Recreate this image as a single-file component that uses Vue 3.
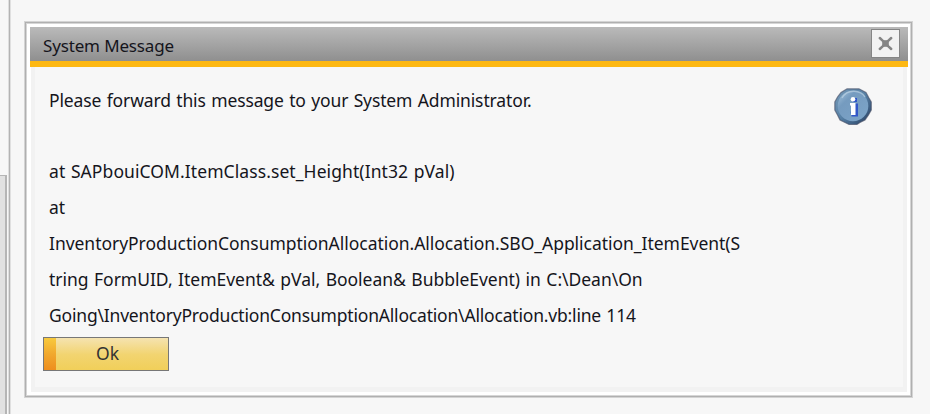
<script setup>
const lines = [
  { text: 'Please forward this message to your System Administrator.', cls: 'intro' },
  { text: '\u00a0', cls: 'blank' },
  { text: 'at SAPbouiCOM.ItemClass.set_Height(Int32 pVal)', cls: 'frame' },
  { text: 'at', cls: 'at' },
  { text: 'InventoryProductionConsumptionAllocation.Allocation.SBO_Application_ItemEvent(S', cls: 'method' },
  { text: 'tring FormUID, ItemEvent& pVal, Boolean& BubbleEvent) in C:\\Dean\\On', cls: 'args' },
  { text: 'Going\\InventoryProductionConsumptionAllocation\\Allocation.vb:line 114', cls: 'path' },
]
</script>

<template>
  <div class="screen">
    <aside class="rail"><div class="rail-panel"></div></aside>
    <main class="workspace">
      <section class="dialog" role="dialog">
        <header class="titlebar">
          <h1 class="title">System Message</h1>
          <button class="close" aria-label="Close">
            <svg width="15" height="15" viewBox="0 0 15 15">
              <path d="M1.8 2 4.6 4.6 10.4 10.4 13.2 13M13.2 2 10.4 4.6 4.6 10.4 1.8 13" fill="none" stroke="#858585" stroke-width="2.5" stroke-linecap="round" />
              <path d="M4.2 4.2h6.6v6.6h-6.6z" fill="#858585" />
            </svg>
          </button>
        </header>
        <div class="content">
          <div class="message">
            <p v-for="(line, i) in lines" :key="i" class="line" :class="line.cls">{{ line.text }}</p>
            <button class="ok"><span class="accent"></span><span class="ok-label">Ok</span></button>
          </div>
          <svg class="info" width="38" height="38" viewBox="0 0 38 38">
            <defs>
              <linearGradient id="rim" x1="0" y1="0" x2="1" y2="1">
                <stop offset="0" stop-color="#789bb9" />
                <stop offset=".5" stop-color="#5680a5" />
                <stop offset="1" stop-color="#253c5e" />
              </linearGradient>
              <linearGradient id="face" x1="0" y1="0" x2="1" y2="1">
                <stop offset="0" stop-color="#a5c4dc" />
                <stop offset=".3" stop-color="#759bbf" />
                <stop offset="1" stop-color="#7ca5c9" />
              </linearGradient>
            </defs>
            <path d="M13 .8H25L32 4.5 35 10 37.3 14V22L34.5 27 31 32 26 34.5 23 36.5H15L11 34.5 6 32 3.5 27 .8 22V14L3.5 9 7 4.5Z" fill="url(#rim)" stroke="#434960" stroke-opacity=".6" stroke-width="1.2" />
            <circle cx="19" cy="18" r="15.3" fill="url(#face)" />
            <path d="M8 10Q12 3 20 3.2T31 9" fill="none" stroke="#c5d9e8" stroke-opacity=".6" stroke-width="1.5" />
            <path d="M19 10h4v4h-4zM18 15.5h6V28.500h-6.500v-3h-1z" fill="#3157c8" />
            <circle cx="19" cy="11.300" r="2.300" fill="#fff" />
            <path d="M16 15H21.5V27H17V17.5H16z" fill="#fff" />
          </svg>
        </div>
      </section>
    </main>
  </div>
</template>

<style>
body { margin: 0; overflow: hidden; background: #f7f7f7; }
</style>

<style scoped>
* { box-sizing: border-box; }
.screen { display: flex; width: 930px; height: 414px; background: #f7f7f7; font-family: "Noto Sans", sans-serif; color: #15151c; }
.rail { width: 11px; padding-top: 175px; border-right: 1px solid #e0e0e0; box-shadow: inset -1px 0 #b3b3b3, inset -2px 0 #dedede; flex: none; }
.rail-panel { width: 7px; height: 239px; background: #e1e1e1; border-top: 1px solid #b5b5b5; border-right: 2px solid #b5b5b5; }
.workspace { flex: 1; padding: 21px 0 0 13px; }
.dialog { width: 889px; height: 377px; border: 1px solid #d4d4d4; background: #fff; box-shadow: inset 0 0 0 1px #b0b0b0, inset 0 0 0 2px #d6d6d6; padding: 5px 4px 5px 5px; }
.titlebar { display: flex; justify-content: space-between; height: 40px; border-bottom: 6px solid #fdb813; background: linear-gradient(#bababa, #8f8f8f); width: 878px; padding: 2px 8px 0 13px; }
.title { margin: 4px 0 0; font-size: 17px; line-height: 26px; font-weight: 400; white-space: nowrap; letter-spacing: -.15px; }
.close { display: grid; place-items: center; width: 29px; height: 29px; padding: 0; background: #f2f2f2; border: 1px solid #858585; }
.content { display: flex; justify-content: space-between; width: 876px; height: 325px; margin-left: 1px; border: solid #f2f2f2; border-width: 0 4px 5px; background: #f7f7f7; padding: 15px 31px 0 8px; }
.message { width: 710px; }
.line { margin: 0 0 0 6px; width: max-content; height: 36px; line-height: 36px; font-size: 17.5px; white-space: pre; }
.intro { letter-spacing: -.13px; word-spacing: 1px; }
.blank { height: 35px; }
.frame { letter-spacing: .08px; word-spacing: 1px; }
.method { letter-spacing: -.035px; }
.args { letter-spacing: -.025px; word-spacing: 1px; }
.path { letter-spacing: -.19px; word-spacing: 1px; }
.ok { display: flex; align-items: stretch; width: 126px; height: 34px; margin-top: 4px; padding: 0; border: 1px solid #777; background: linear-gradient(#f5e3b0, #f2d470 52%, #f1cf59); font: inherit; color: #333; }
.accent { width: 12px; background: linear-gradient(#f8ca3d, #f1a82e 50%, #ee8e1e); }
.ok-label { margin-left: 40px; font-size: 17.5px; line-height: 30px; }
.info { flex: none; margin-top: 6px; }
</style>
